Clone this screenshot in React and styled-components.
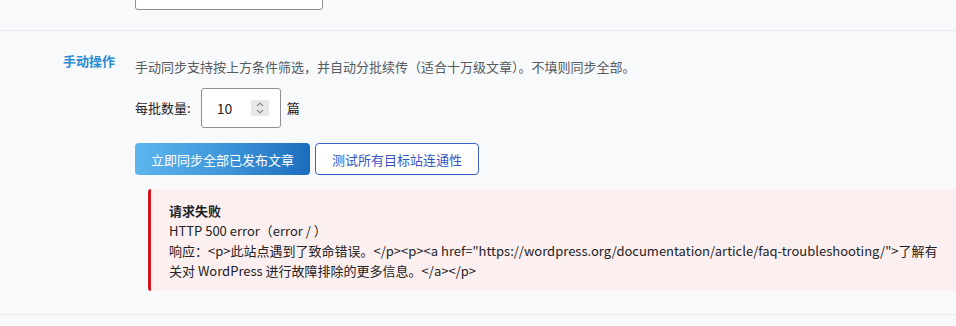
import styled, { createGlobalStyle } from "styled-components";

const GlobalStyle = createGlobalStyle`
  html, body {
    margin: 0;
    padding: 0;
    background: #f8f9fb;
  }
  body {
    font-family: "Noto Sans CJK SC", "Noto Sans", sans-serif;
    font-size: 13px;
    color: #1d2327;
  }
`;

const Page = styled.div`
  margin-top: -22px;
`;

const Section = styled.div`
  display: grid;
  grid-template-columns: 135px 1fr;
  padding: ${p => p.$pad || "20px 0 20px"};
  border-bottom: 1px solid #e6e8ec;
`;

const Label = styled.div`
  padding: 20px 0 0 63px;
  font-weight: 700;
  color: #2a8bd6;
  line-height: 20px;
`;

const Field = styled.div`
  padding-right: 12px;
`;

const TextInput = styled.div`
  width: 186px;
  height: 30px;
  background: #fff;
  border: 1px solid #8c8f94;
  border-radius: 3px;
`;

const Desc = styled.p`
  margin: 26px 0 0;
  line-height: 20px;
  color: #555b61;
`;

const QtyRow = styled.div`
  display: flex;
  align-items: center;
  gap: 6px;
  margin-top: 11px;
  line-height: 20px;
`;

const QtyLabel = styled.span`
  margin-right: 4px;
`;

const NumberBox = styled.div`
  box-sizing: border-box;
  width: 80px;
  height: 40px;
  background: #fff;
  border: 1px solid #8c8f94;
  border-radius: 3px;
  display: flex;
  align-items: center;
  justify-content: space-between;
  padding: 0 11px 0 15px;
  font-size: 14px;
  color: #1d2327;
`;

const Spinner = styled.span`
  width: 18px;
  height: 16px;
  background: #e8e8e8;
  display: flex;
  align-items: center;
  justify-content: center;
`;

const Buttons = styled.div`
  display: flex;
  gap: 5px;
  margin-top: 15px;
`;

const Button = styled.button`
  box-sizing: border-box;
  height: 32px;
  padding: 0 16px;
  font-family: inherit;
  font-size: 13px;
  border-radius: 4px;
  cursor: pointer;
  ${p =>
    p.$primary
      ? `
    background: linear-gradient(90deg, #5cb6ee 0%, #3f97db 50%, #1c6dbd 100%);
    border: none;
    color: #fff;
  `
      : `
    background: #fff;
    border: 1px solid #3d5fc9;
    color: #3557bd;
  `}
`;

const Notice = styled.div`
  margin: 14px 0 0 13px;
  padding: 12px 20px 10px 18px;
  background: #fcefef;
  border-left: 3px solid #d0161c;
  border-radius: 3px 0 0 3px;
  line-height: 20px;
  color: #1d2327;
`;

const NoticeTitle = styled.div`
  font-weight: 700;
`;

const NoticeLine = styled.div`
  white-space: nowrap;
`;

const SpinIcon = () => (
  <svg width="10" height="14" viewBox="0 0 10 14" fill="none" stroke="#8c8f94" strokeWidth="1.2">
    <path d="M2 5l3-3 3 3" />
    <path d="M2 9l3 3 3-3" />
  </svg>
);

export default function App() {
  return (
    <Page>
      <GlobalStyle />
      <Section $pad="0 0 20px">
        <div />
        <Field>
          <TextInput />
        </Field>
      </Section>
      <Section $pad="0 0 23px">
        <Label>手动操作</Label>
        <Field>
          <Desc>手动同步支持按上方条件筛选，并自动分批续传（适合十万级文章）。不填则同步全部。</Desc>
          <QtyRow>
            <QtyLabel>每批数量:</QtyLabel>
            <NumberBox>
              <span>10</span>
              <Spinner>
                <SpinIcon />
              </Spinner>
            </NumberBox>
            <span>篇</span>
          </QtyRow>
          <Buttons>
            <Button $primary>立即同步全部已发布文章</Button>
            <Button>测试所有目标站连通性</Button>
          </Buttons>
          <Notice>
            <NoticeTitle>请求失败</NoticeTitle>
            <NoticeLine>HTTP 500 error（error / ）</NoticeLine>
            <NoticeLine>
              响应：&lt;p&gt;此站点遇到了致命错误。&lt;/p&gt;&lt;p&gt;&lt;a href="https://wordpress.org/documentation/article/faq-troubleshooting/"&gt;了解有
            </NoticeLine>
            <NoticeLine>关对 WordPress 进行故障排除的更多信息。&lt;/a&gt;&lt;/p&gt;</NoticeLine>
          </Notice>
        </Field>
      </Section>
    </Page>
  );
}
